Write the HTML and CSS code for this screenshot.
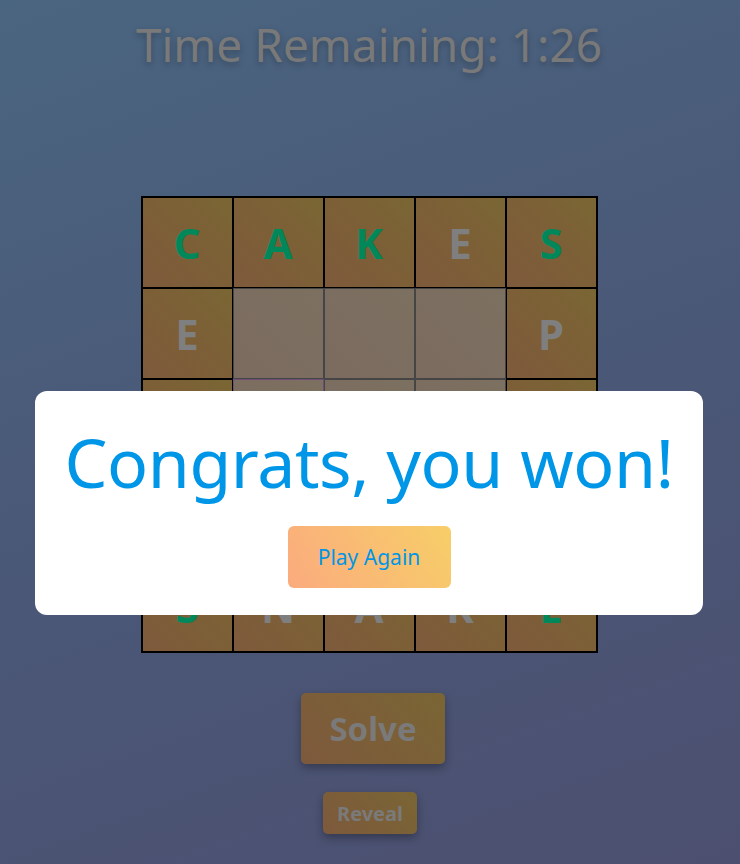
FILE: index.html
```html
<!DOCTYPE html>
<html>
<head>
<meta charset="utf-8">
<link rel="stylesheet" href="styles.css">
</head>
<body>
<div class="page">
  <h1 class="timer">Time Remaining: 1:26</h1>
  <div class="grid">
    <div class="cell"><span class="g">C</span></div>
    <div class="cell"><span class="g">A</span></div>
    <div class="cell"><span class="g">K</span></div>
    <div class="cell"><span>E</span></div>
    <div class="cell"><span class="g">S</span></div>

    <div class="cell"><span>E</span></div>
    <div class="cell empty"></div>
    <div class="cell empty"></div>
    <div class="cell empty"></div>
    <div class="cell"><span>P</span></div>

    <div class="cell"><span>A</span></div>
    <div class="cell empty selected"></div>
    <div class="cell empty"></div>
    <div class="cell empty"></div>
    <div class="cell"><span>I</span></div>

    <div class="cell"><span>R</span></div>
    <div class="cell empty"></div>
    <div class="cell empty"></div>
    <div class="cell empty"></div>
    <div class="cell"><span>L</span></div>

    <div class="cell"><span class="g">S</span></div>
    <div class="cell"><span>N</span></div>
    <div class="cell"><span>A</span></div>
    <div class="cell"><span>K</span></div>
    <div class="cell"><span class="g">E</span></div>
  </div>
  <button class="solve">Solve</button>
  <button class="reveal">Reveal</button>
</div>
<div class="modal">
  <div class="modal-title">Congrats, you won!</div>
  <button class="again">Play Again</button>
</div>
</body>
</html>
```
FILE: styles.css
```css
html, body {
  margin: 0;
  padding: 0;
  height: 100%;
}
body {
  background: linear-gradient(160deg, #4a6580 0%, #4a5877 50%, #4c4f70 100%);
  font-family: "Noto Sans", "Open Sans", sans-serif;
  overflow: hidden;
  position: relative;
}
.page {
  display: flex;
  flex-direction: column;
  align-items: center;
}
.timer {
  margin: 14px 2px 0 0;
  font-size: 46px;
  font-weight: 400;
  color: #797979;
  line-height: 60px;
  text-shadow: 0 3px 6px rgba(0,0,0,0.25);
}
.grid {
  margin-top: 122px;
  margin-right: 2px;
  display: grid;
  grid-template-columns: repeat(5, 91px);
  grid-template-rows: repeat(5, 91px);
  border: 1px solid #000;
}
.cell {
  border: 1px solid #000;
  background: linear-gradient(45deg, #7e5a3c 0%, #7c6036 60%, #7a6634 100%);
  display: flex;
  align-items: center;
  justify-content: center;
  font-weight: 700;
  font-size: 42px;
  color: #7f7f7f;
}
.cell .g {
  color: #00875a;
}
.cell.empty {
  background: linear-gradient(45deg, #7b6b5f 0%, #7c7060 100%);
  border-color: #454545;
}
.cell.selected {
  border-color: #6e4d78;
}
.solve {
  margin-top: 40px;
  margin-left: 6px;
  width: 144px;
  height: 71px;
  border: none;
  border-radius: 5px;
  background: linear-gradient(45deg, #7d593c 0%, #7a6534 100%);
  color: #7a7a7a;
  font-family: "Noto Sans", sans-serif;
  font-weight: 700;
  font-size: 33px;
  box-shadow: 0 4px 8px rgba(0,0,0,0.3);
}
.reveal {
  margin-top: 28px;
  width: 94px;
  height: 42px;
  border: none;
  border-radius: 5px;
  background: linear-gradient(45deg, #7d593c 0%, #7a6534 100%);
  color: #7a7a7a;
  font-family: "Noto Sans", sans-serif;
  font-weight: 700;
  font-size: 20px;
  box-shadow: 0 4px 8px rgba(0,0,0,0.3);
}
.modal {
  position: absolute;
  top: 391px;
  left: 35px;
  width: 668px;
  height: 224px;
  background: #fff;
  border-radius: 12px;
  display: flex;
  flex-direction: column;
  align-items: center;
}
.modal-title {
  margin-top: 26px;
  font-size: 68px;
  line-height: 90px;
  color: #0096e8;
  font-weight: 400;
  letter-spacing: -0.4px;
}
.again {
  margin-top: 19px;
  width: 163px;
  height: 62px;
  border: none;
  border-radius: 6px;
  background: linear-gradient(60deg, #fbab7e 0%, #f7ce68 100%);
  color: #0096e8;
  font-family: "Noto Sans", sans-serif;
  font-size: 21px;
}
```
